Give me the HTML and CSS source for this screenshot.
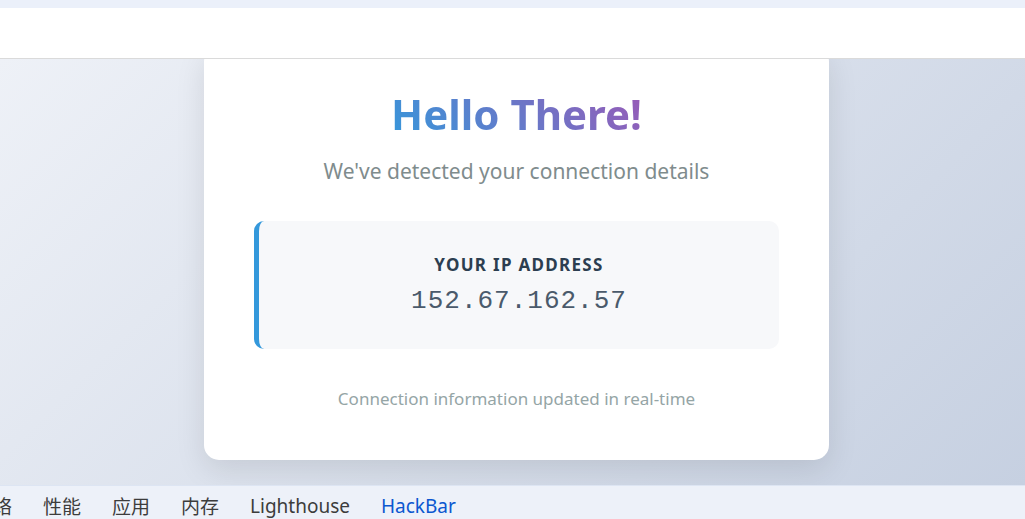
FILE: index.html
```html
<!DOCTYPE html>
<html lang="en">
<head>
<meta charset="utf-8">
<title>Hello There</title>
<link rel="stylesheet" href="styles.css">
</head>
<body>
<div class="browser-strip"></div>
<div class="browser-bar"></div>
<main class="viewport">
  <section class="card">
    <h1 class="title">Hello There!</h1>
    <p class="subtitle">We've detected your connection details</p>
    <div class="ip-box">
      <div class="ip-label">YOUR IP ADDRESS</div>
      <div class="ip-value">152.67.162.57</div>
    </div>
    <p class="footer">Connection information updated in real-time</p>
  </section>
</main>
<nav class="devtools">
  <span class="tab cut">络</span>
  <span class="tab">性能</span>
  <span class="tab">应用</span>
  <span class="tab">内存</span>
  <span class="tab">Lighthouse</span>
  <span class="tab active">HackBar</span>
</nav>
</body>
</html>
```
FILE: styles.css
```css
* { box-sizing: border-box; }
html, body { margin: 0; padding: 0; }
body {
  width: 1025px;
  height: 519px;
  overflow: hidden;
  display: flex;
  flex-direction: column;
  font-family: "Noto Sans", "Open Sans", sans-serif;
}
.browser-strip {
  height: 8px;
  background: #ebf0fa;
  flex: none;
}
.browser-bar {
  height: 51px;
  background: #ffffff;
  border-bottom: 1px solid #dadada;
  flex: none;
  position: relative;
  z-index: 2;
}
.viewport {
  flex: 1;
  overflow: hidden;
  display: flex;
  justify-content: center;
  align-items: flex-end;
  padding: 0 0 25px 8px;
  background: linear-gradient(135deg, #eef1f7 0%, #c6d0e1 100%);
}
.card {
  width: 625px;
  background: #ffffff;
  border-radius: 15px;
  box-shadow: 0 10px 30px rgba(0, 0, 0, 0.10);
  padding: 40px 50px 50px;
  text-align: center;
}
.title {
  margin: 0;
  font-size: 42px;
  font-weight: 700;
  line-height: 54px;
  background: linear-gradient(45deg, #3498db, #9b59b6);
  -webkit-background-clip: text;
  background-clip: text;
  color: transparent;
  display: inline-block;
}
.subtitle {
  margin: 16px 0 36px;
  font-size: 21px;
  line-height: 28px;
  color: #7f8c8d;
}
.ip-box {
  background: #f7f8fa;
  border-left: 5px solid #3498db;
  border-radius: 10px;
  height: 128px;
  display: flex;
  flex-direction: column;
  justify-content: center;
  align-items: center;
  gap: 10px;
}
.ip-label {
  font-size: 17px;
  font-weight: 700;
  letter-spacing: 1.3px;
  color: #2c3e50;
  line-height: 22px;
}
.ip-value {
  font-family: "Liberation Mono", "Courier New", monospace;
  font-size: 26px;
  letter-spacing: 1px;
  color: #4a5a6b;
  line-height: 30px;
}
.footer {
  margin: 39px 0 0;
  font-size: 17px;
  line-height: 22px;
  color: #95a5a6;
}
.devtools {
  flex: none;
  height: 34px;
  background: #edf1f9;
  border-top: 1px solid #dde5f3;
  display: flex;
  align-items: center;
  font-family: "Noto Sans", "Noto Sans CJK SC", sans-serif;
  font-size: 19px;
  color: #3c3c3c;
  padding-top: 7px;
}
.tab {
  margin-right: 31px;
  white-space: nowrap;
}
.tab.cut {
  margin-left: -7px;
  margin-right: 31px;
}
.tab.active { color: #0b57d0; }
```
